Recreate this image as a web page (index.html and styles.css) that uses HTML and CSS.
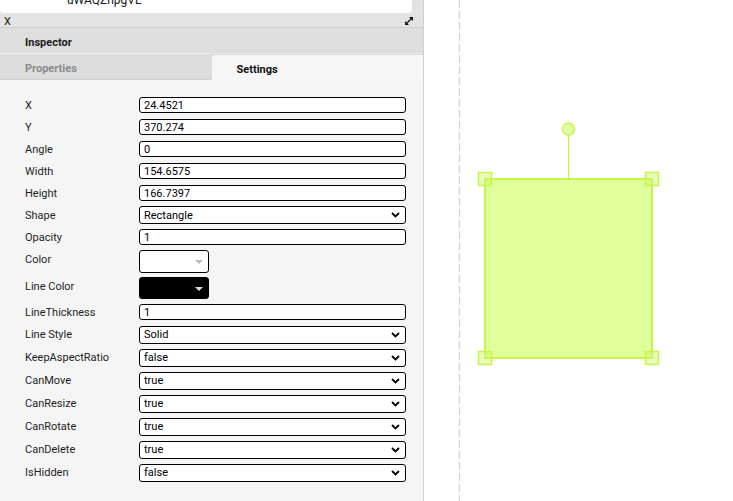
FILE: index.html
```html
<!DOCTYPE html>
<html>
<head>
  <title>Inspector</title>
  <link rel="stylesheet" href="styles.css">
</head>
<body>
  <div class="app">
    <aside class="panel">
      <div class="list">
        <div class="list-item"><span class="list-text">uWAQZhpgVL</span></div>
        <div class="list-scroll"></div>
      </div>

      <div class="dock-bar">
        <span class="dock-close">X</span>
        <svg class="dock-expand" width="10" height="10" viewBox="0 0 10 10">
          <line x1="2.5" y1="7.5" x2="7.5" y2="2.5" stroke="#111" stroke-width="1.3"/>
          <polygon points="9,1 9,5 5,1" fill="#111"/>
          <polygon points="1,9 1,5 5,9" fill="#111"/>
        </svg>
      </div>

      <div class="inspector-head">Inspector</div>

      <div class="tabs">
        <div class="tab">Properties</div>
        <div class="tab tab-active">Settings</div>
      </div>

      <div class="settings">
        <div class="row"><label>X</label><input class="field" value="24.4521"></div>
        <div class="row"><label>Y</label><input class="field" value="370.274"></div>
        <div class="row"><label>Angle</label><input class="field" value="0"></div>
        <div class="row"><label>Width</label><input class="field" value="154.6575"></div>
        <div class="row"><label>Height</label><input class="field" value="166.7397"></div>
        <div class="row"><label>Shape</label>
          <span class="select-wrap">
            <select class="field field-select"><option>Rectangle</option><option>Ellipse</option></select>
            <svg class="chevron" width="9" height="6" viewBox="0 0 9 6"><polyline points="1,1 4.5,4.5 8,1" fill="none" stroke="#000" stroke-width="1.8"/></svg>
          </span>
        </div>
        <div class="row"><label>Opacity</label><input class="field" value="1"></div>
        <div class="row row-color"><label>Color</label>
          <span class="swatch swatch-white"><span class="caret"></span></span>
        </div>
        <div class="row row-color-dark"><label>Line Color</label>
          <span class="swatch swatch-black"><span class="caret"></span></span>
        </div>
        <div class="row"><label>LineThickness</label><input class="field" value="1"></div>
        <div class="row row-sel"><label>Line Style</label>
          <span class="select-wrap">
            <select class="field field-select"><option>Solid</option><option>Dashed</option></select>
            <svg class="chevron" width="9" height="6" viewBox="0 0 9 6"><polyline points="1,1 4.5,4.5 8,1" fill="none" stroke="#000" stroke-width="1.8"/></svg>
          </span>
        </div>
        <div class="row row-sel"><label>KeepAspectRatio</label>
          <span class="select-wrap">
            <select class="field field-select"><option>false</option><option>true</option></select>
            <svg class="chevron" width="9" height="6" viewBox="0 0 9 6"><polyline points="1,1 4.5,4.5 8,1" fill="none" stroke="#000" stroke-width="1.8"/></svg>
          </span>
        </div>
        <div class="row row-sel"><label>CanMove</label>
          <span class="select-wrap">
            <select class="field field-select"><option>true</option><option>false</option></select>
            <svg class="chevron" width="9" height="6" viewBox="0 0 9 6"><polyline points="1,1 4.5,4.5 8,1" fill="none" stroke="#000" stroke-width="1.8"/></svg>
          </span>
        </div>
        <div class="row row-sel"><label>CanResize</label>
          <span class="select-wrap">
            <select class="field field-select"><option>true</option><option>false</option></select>
            <svg class="chevron" width="9" height="6" viewBox="0 0 9 6"><polyline points="1,1 4.5,4.5 8,1" fill="none" stroke="#000" stroke-width="1.8"/></svg>
          </span>
        </div>
        <div class="row row-sel"><label>CanRotate</label>
          <span class="select-wrap">
            <select class="field field-select"><option>true</option><option>false</option></select>
            <svg class="chevron" width="9" height="6" viewBox="0 0 9 6"><polyline points="1,1 4.5,4.5 8,1" fill="none" stroke="#000" stroke-width="1.8"/></svg>
          </span>
        </div>
        <div class="row row-sel"><label>CanDelete</label>
          <span class="select-wrap">
            <select class="field field-select"><option>true</option><option>false</option></select>
            <svg class="chevron" width="9" height="6" viewBox="0 0 9 6"><polyline points="1,1 4.5,4.5 8,1" fill="none" stroke="#000" stroke-width="1.8"/></svg>
          </span>
        </div>
        <div class="row row-sel"><label>IsHidden</label>
          <span class="select-wrap">
            <select class="field field-select"><option>false</option><option>true</option></select>
            <svg class="chevron" width="9" height="6" viewBox="0 0 9 6"><polyline points="1,1 4.5,4.5 8,1" fill="none" stroke="#000" stroke-width="1.8"/></svg>
          </span>
        </div>
      </div>
    </aside>

    <main class="canvas">
      <svg width="309" height="501" viewBox="0 0 309 501">
        <line x1="35.5" y1="0" x2="35.5" y2="501" stroke="#d4d4d4" stroke-width="1.3" stroke-dasharray="8 3"/>
        <!-- selected shape -->
        <line x1="144.5" y1="135" x2="144.5" y2="179" stroke="#c6f548" stroke-width="1.2"/>
        <circle cx="144.5" cy="129" r="6" fill="#e0ffa0" stroke="#c6f548" stroke-width="1.5"/>
        <rect x="61" y="179" width="167" height="179" fill="#dfff9b" stroke="#c6f548" stroke-width="2"/>
        <rect x="54.5" y="172.5" width="13" height="13" fill="rgba(205,250,100,0.45)" stroke="#c6f548" stroke-width="1.5"/>
        <rect x="221.5" y="172.5" width="13" height="13" fill="rgba(205,250,100,0.45)" stroke="#c6f548" stroke-width="1.5"/>
        <rect x="54.5" y="351.5" width="13" height="13" fill="rgba(205,250,100,0.45)" stroke="#c6f548" stroke-width="1.5"/>
        <rect x="221.5" y="351.5" width="13" height="13" fill="rgba(205,250,100,0.45)" stroke="#c6f548" stroke-width="1.5"/>
      </svg>
    </main>
  </div>
</body>
</html>
```

FILE: styles.css
```css
body {
  margin: 0;
  font-family: Roboto, "Liberation Sans", Arial, sans-serif;
  font-size: 11px;
  color: #1a1a1a;
  background: #fff;
  overflow: hidden;
}
.app {
  display: flex;
  width: 733px;
  height: 501px;
}
.panel {
  width: 423px;
  border-right: 1px solid #d0d0d0;
  background: #f5f5f5;
  display: flex;
  flex-direction: column;
}

/* lista de arriba (scrolleada) */
.list {
  height: 14px;
  background: #e4e4e4;
  display: flex;
  overflow: hidden;
}
.list-item {
  flex: 1;
  height: 13px;
  background: #fff;
  border-radius: 0 0 4px 4px;
  padding-left: 67px;
  font-size: 12px;
  overflow: hidden;
}
.list-text {
  display: block;
  line-height: 13px;
  margin-top: -6px;
}
.list-scroll {
  width: 8px;
  height: 10px;
  margin-right: 3px;
  background: #e2e2e2;
}

.dock-bar {
  height: 13px;
  background: #e3e3e3;
  border-bottom: 1px solid #cfcfcf;
  display: flex;
  align-items: center;
  justify-content: space-between;
  padding: 0 9px 0 4px;
}
.dock-close {
  font-size: 11px;
  line-height: 13px;
  padding-top: 1px;
}

.inspector-head {
  height: 20px;
  padding-top: 5px;
  line-height: 20px;
  background: #dedede;
  border-bottom: 1px solid #ececec;
  padding-left: 25px;
  font-weight: bold;
}

.tabs {
  display: flex;
  height: 26px;
  background: #dcdcdc;
}
.tab {
  flex: 1;
  height: 20px;
  padding: 5px 0 0 25px;
  line-height: 20px;
  font-weight: bold;
  color: #8a8a8a;
  background: #dcdcdc;
  border-radius: 0 0 4px 0;
  box-shadow: 0 1px 0 #cfcfcf;
}
.tab-active {
  margin-top: 1px;
  color: #111;
  background: #f6f6f6;
  border-radius: 4px 0 0 0;
  box-shadow: none;
}

.settings {
  padding: 14px 0 0 25px;
}
.row {
  display: flex;
  align-items: center;
  height: 22px;
}
.row-sel {
  height: 23px;
}
.row-color {
  height: 27px;
}
.row-color-dark {
  height: 26px;
}
.row label {
  width: 114px;
  color: #1f1f1f;
}
.row-color label,
.row-color-dark label {
  margin-bottom: 4px;
}
.field {
  width: 267px;
  height: 16px;
  box-sizing: border-box;
  border: 1px solid #000;
  border-radius: 3px;
  background: #fff;
  padding: 0 4px;
  font-family: Roboto, "Liberation Sans", Arial, sans-serif;
  font-size: 11px;
  color: #000;
  outline: none;
}
.select-wrap {
  position: relative;
  display: block;
}
.field-select {
  height: 18px;
  appearance: none;
  -webkit-appearance: none;
  display: block;
}
.chevron {
  position: absolute;
  right: 6px;
  top: 6px;
}
.swatch {
  display: block;
  position: relative;
  width: 70px;
  height: 23px;
  box-sizing: border-box;
  border: 1px solid #000;
  border-radius: 3px;
  background: #fff;
}
.swatch-black {
  height: 22px;
  background: #000;
}
.caret {
  position: absolute;
  right: 5px;
  top: 9px;
  border-left: 4px solid transparent;
  border-right: 4px solid transparent;
  border-top: 4px solid #bbb;
}
.swatch-black .caret {
  border-top-color: #ddd;
}

.canvas {
  flex: 1;
  background: #fff;
}
.canvas svg {
  display: block;
}
```
